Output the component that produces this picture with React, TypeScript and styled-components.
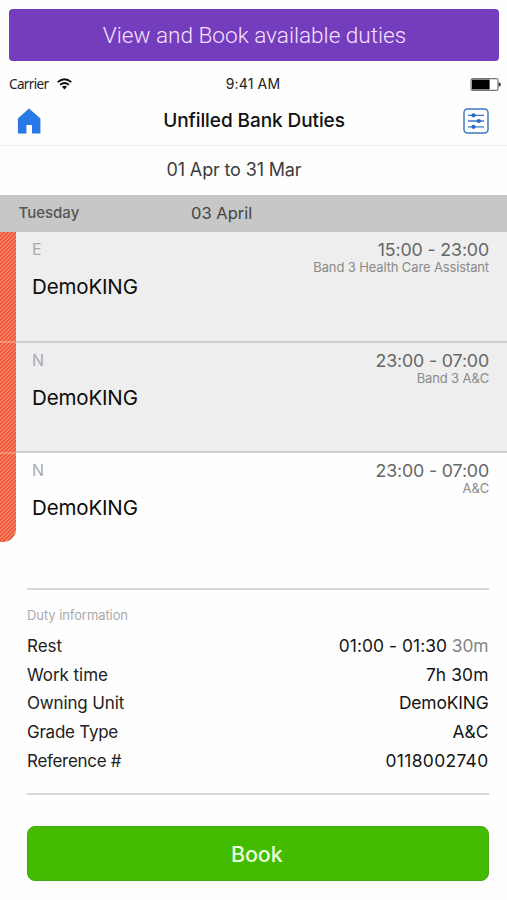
import React from "react";
import styled, { createGlobalStyle } from "styled-components";

const GlobalStyle = createGlobalStyle`
  body {
    margin: 0;
    background: #fefefe;
    font-family: Inter, "Liberation Sans", sans-serif;
    color: #111;
  }
  * { box-sizing: border-box; }
`;

const Screen = styled.main`
  width: 507px;
  height: 900px;
  overflow: hidden;
  display: flex;
  flex-direction: column;
  background: #fefefe;
`;

const Banner = styled.div`
  flex: none;
  margin: 9px 8px 0 9px;
  height: 52px;
  padding-left: 1px;
  border-radius: 4px;
  background: #743dbd;
  color: #f8e0ff;
  font: 300 22.6px/54px Roboto, sans-serif;
  letter-spacing: -0.02px;
  text-align: center;
`;

const StatusBar = styled.div`
  flex: none;
  height: 34px;
  margin-top: 6px;
  padding: 0 6px 0 9px;
  display: grid;
  grid-template-columns: 1fr auto 1fr;
  align-items: center;
  color: #222;
  line-height: 34px;
`;

const Carrier = styled.div`
  display: flex;
  align-items: center;
  gap: 9px;
  font-family: "Noto Sans", sans-serif;
  font-size: 13.5px;
  letter-spacing: -0.65px;
`;

const Clock = styled.div`
  padding-right: 4px;
  font-size: 14px;
  letter-spacing: 0.15px;
`;

const BatterySlot = styled.div`
  display: flex;
  justify-content: flex-end;
`;

const NavBar = styled.header`
  flex: none;
  height: 45px;
  padding: 0 18px 0 17px;
  display: flex;
  align-items: center;
  justify-content: space-between;
  border-bottom: 1.5px solid #eeeeee;
`;

const Title = styled.h1`
  margin: 0 0 5px 4px;
  font-size: 19px;
  font-weight: 450;
  line-height: 40px;
  letter-spacing: -0.08px;
`;

const IconButton = styled.button`
  display: flex;
  margin: 0 0 5px;
  padding: 0;
  border: 0;
  background: none;
`;

const DateRange = styled.div`
  flex: none;
  height: 49px;
  padding-right: 39px;
  line-height: 48px;
  font-size: 18px;
  letter-spacing: -0.15px;
  color: #3c3c3c;
  text-align: center;
`;

const DayBar = styled.div`
  flex: none;
  height: 37px;
  padding-left: 18.5px;
  display: grid;
  grid-template-columns: 172.5px 1fr;
  line-height: 36px;
  background: #c7c7c7;
  color: #444;
`;

const Weekday = styled.span`
  font-size: 15px;
  font-weight: 450;
  color: #555;
`;

const DayDate = styled.span`
  font-size: 16.5px;
  line-height: 37px;
`;

const Duties = styled.section`
  flex: none;
  height: 356px;
  display: grid;
  grid-template-columns: 16px 1fr;
`;

const Stripe = styled.div`
  height: 310px;
  border-radius: 0 0 13px 0;
  background:
    linear-gradient(transparent 109px, #f7a48f99 109px, #f7a48f99 111px, transparent 111px,
      transparent 220px, #f7a48f99 220px, #f7a48f99 222px, transparent 222px),
    repeating-linear-gradient(135deg, #ee5033 0, #ee5033 0.6px, #f89a7e 1.7px, #ee5033 2.83px);
`;

const DutyRow = styled.article<{ $shaded?: boolean }>`
  height: 110.5px;
  padding: 7px 18px 0 16px;
  display: grid;
  grid-template-columns: 1fr auto;
  align-content: start;
  background: ${(p) => (p.$shaded ? "#eeeeee" : "transparent")};
  border-bottom: ${(p) => (p.$shaded ? "2px solid #cecece" : "0")};
`;

const ShiftCode = styled.div`
  font-size: 16px;
  line-height: 21px;
  color: #aaa;
`;

const Unit = styled.div`
  margin-top: 14px;
  font-size: 20.5px;
  line-height: 26px;
  letter-spacing: -0.15px;
  color: #0c0c0c;
`;

const Timing = styled.div`
  grid-row: span 2;
  text-align: right;
`;

const Hours = styled.div`
  font-size: 17.8px;
  line-height: 21px;
  letter-spacing: -0.15px;
  color: #666;
`;

const Grade = styled.div`
  font-size: 13px;
  line-height: 15px;
  letter-spacing: -0.13px;
  color: #8a8a8a;
`;

const Details = styled.section`
  flex: none;
  height: 207px;
  margin: 0 18.5px 0 27px;
  padding-top: 15px;
  border-top: 2px solid #d8d8d8;
  border-bottom: 2px solid #d8d8d8;
`;

const DetailsHeading = styled.h2`
  margin: 0 0 7px;
  font-size: 13px;
  font-weight: 400;
  line-height: 20px;
  letter-spacing: -0.08px;
  color: #aaa;
`;

const DetailRow = styled.div`
  display: flex;
  justify-content: space-between;
  font-size: 17px;
  line-height: 28.7px;
  color: #222;
`;

const DetailLabel = styled.span<{ $tracking?: number }>`
  letter-spacing: ${(p) => p.$tracking ?? 0}px;
`;

const DetailValue = styled.span<{ $tracking?: number }>`
  font-size: 17.4px;
  letter-spacing: ${(p) => p.$tracking ?? 0}px;
  color: #151515;
`;

const Muted = styled.span`
  letter-spacing: -0.1px;
  color: #858585;
`;

const BookButton = styled.button`
  flex: none;
  height: 55px;
  margin: 31px 18.5px 0 27px;
  padding: 2px 2px 0 0;
  border: 1px solid #43a814;
  border-radius: 8px;
  background: #43bb00;
  color: #eaffdc;
  font: 450 21.5px/51px Inter, sans-serif;
  letter-spacing: -0.1px;
`;

const WifiIcon = () => (
  <svg width="15" height="12" viewBox="0 0 15 12" fill="none" stroke="#111" strokeWidth="1.9">
    <path d="M.7 4.1Q7.5-1.7 14.3 4.1" />
    <path d="M3.1 6.7Q7.5 3.1 11.9 6.7" />
    <path d="M7.5 11.5 4.9 8.7Q7.5 6.8 10.1 8.7Z" fill="#111" stroke="none" />
  </svg>
);

const BatteryIcon = () => (
  <svg width="31" height="13" viewBox="0 0 31 13">
    <rect x="1.1" y=".6" width="26.9" height="11.8" rx="1.6" fill="#fff" stroke="#777" strokeWidth="1.2" />
    <rect x="2" y="1.6" width="17.6" height="9.8" fill="#000" />
    <path d="M28.6 4.2q2.2.5 2.2 2.3t-2.2 2.3z" fill="#333" />
  </svg>
);

const HomeIcon = () => (
  <svg width="24" height="26" viewBox="0 0 24 26">
    <path d="M12 .6 23.4 10.4V25.4H15V17H9.4v8.4H.9V10.4Z" fill="#2878e5" />
  </svg>
);

const FilterIcon = () => (
  <svg width="26" height="26" viewBox="0 0 26 26" fill="none" stroke="#3b78c8">
    <rect x="1" y="1" width="24" height="24" rx="3.5" strokeWidth="1.5" />
    <path d="M5 7.3H21M5 13H21M5 18.8H21" strokeWidth="1.3" />
    <g fill="#2b66c4" stroke="none">
      <circle cx="10.5" cy="7.3" r="2.1" />
      <circle cx="15.8" cy="13" r="2.1" />
      <circle cx="10.5" cy="18.8" r="2.1" />
    </g>
  </svg>
);

const duties = [
  { code: "E", unit: "DemoKING", hours: "15:00 - 23:00", grade: "Band 3 Health Care Assistant", shaded: true },
  { code: "N", unit: "DemoKING", hours: "23:00 - 07:00", grade: "Band 3 A&C", shaded: true },
  { code: "N", unit: "DemoKING", hours: "23:00 - 07:00", grade: "A&C", shaded: false },
];

const details = [
  { label: "Rest", value: "01:00 - 01:30", extra: "30m", tracking: 0.05, labelTracking: 0 },
  { label: "Work time", value: "7h 30m", tracking: 0.1, labelTracking: -0.05 },
  { label: "Owning Unit", value: "DemoKING", tracking: -0.15, labelTracking: -0.15 },
  { label: "Grade Type", value: "A&C", tracking: 0, labelTracking: -0.25 },
  { label: "Reference #", value: "0118002740", tracking: 0.35, labelTracking: -0.3 },
];

export default function App() {
  return (
    <Screen>
      <GlobalStyle />
      <Banner>View and Book available duties</Banner>
      <StatusBar>
        <Carrier>Carrier <WifiIcon /></Carrier>
        <Clock>9:41 AM</Clock>
        <BatterySlot><BatteryIcon /></BatterySlot>
      </StatusBar>
      <NavBar>
        <IconButton aria-label="Home"><HomeIcon /></IconButton>
        <Title>Unfilled Bank Duties</Title>
        <IconButton aria-label="Filter"><FilterIcon /></IconButton>
      </NavBar>
      <DateRange>01 Apr to 31 Mar</DateRange>
      <DayBar>
        <Weekday>Tuesday</Weekday>
        <DayDate>03 April</DayDate>
      </DayBar>
      <Duties>
        <Stripe />
        <div>
          {duties.map((d, i) => (
            <DutyRow key={i} $shaded={d.shaded}>
              <ShiftCode>{d.code}</ShiftCode>
              <Timing>
                <Hours>{d.hours}</Hours>
                <Grade>{d.grade}</Grade>
              </Timing>
              <Unit>{d.unit}</Unit>
            </DutyRow>
          ))}
        </div>
      </Duties>
      <Details>
        <DetailsHeading>Duty information</DetailsHeading>
        {details.map((d) => (
          <DetailRow key={d.label}>
            <DetailLabel $tracking={d.labelTracking}>{d.label}</DetailLabel>
            <DetailValue $tracking={d.tracking}>
              {d.value}
              {d.extra && <Muted> {d.extra}</Muted>}
            </DetailValue>
          </DetailRow>
        ))}
      </Details>
      <BookButton>Book</BookButton>
    </Screen>
  );
}
